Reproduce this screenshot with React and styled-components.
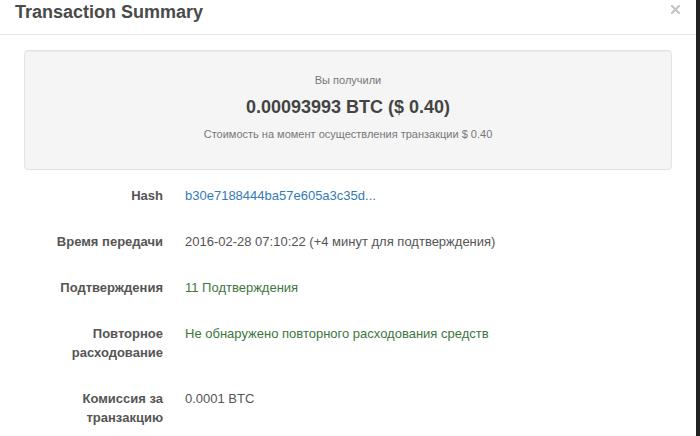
import React from "react";
import styled, { createGlobalStyle } from "styled-components";

const Global = createGlobalStyle`
  html, body { margin: 0; padding: 0; background: #222; }
  body { font-family: "Liberation Sans", Arial, sans-serif; }
  #root { width: 700px; height: 436px; overflow: hidden; }
`;

const Modal = styled.div`
  width: 696px;
  height: 436px;
  background: #fff;
  display: flex;
  flex-direction: column;
`;

const Header = styled.div`
  height: 35px;
  border-bottom: 1px solid #e5e5e5;
  display: flex;
  align-items: flex-start;
  justify-content: space-between;
  padding: 2px 16px 0 15px;
  box-sizing: border-box;
`;

const Title = styled.h4`
  margin: 0;
  font-size: 18px;
  line-height: 20px;
  font-weight: bold;
  color: #4a4a4a;
`;

const Close = styled.button`
  border: 0;
  background: none;
  padding: 0;
  margin-top: 3px;
  width: 9px;
  height: 9px;
  display: flex;
  cursor: pointer;
`;

const Well = styled.div`
  margin: 15px 24px 0;
  height: 120px;
  box-sizing: border-box;
  background: #f5f5f5;
  border: 1px solid #e3e3e3;
  border-radius: 4px;
  box-shadow: inset 0 1px 1px rgba(0, 0, 0, 0.05);
  padding-top: 21px;
  display: flex;
  flex-direction: column;
  align-items: center;
  gap: 7px;
`;

const Small = styled.div`
  font-size: 11px;
  line-height: 16px;
  color: #777;
`;

const Amount = styled.div`
  font-size: 18px;
  line-height: 24px;
  font-weight: bold;
  color: #444;
`;

const Details = styled.div`
  margin-top: 16px;
  padding-left: 24px;
  display: grid;
  grid-template-columns: 139px 1fr;
  column-gap: 22px;
  row-gap: 27px;
  font-size: 13px;
  line-height: 19px;
`;

const Label = styled.div`
  text-align: right;
  font-weight: bold;
  color: #555;
`;

const Value = styled.div`
  color: ${(p) => (p.$tone === "link" ? "#337ab7" : p.$tone === "ok" ? "#3c763d" : "#555")};
`;

const rows = [
  { label: "Hash", value: "b30e7188444ba57e605a3c35d...", tone: "link" },
  { label: "Время передачи", value: "2016-02-28 07:10:22 (+4 минут для подтверждения)" },
  { label: "Подтверждения", value: "11 Подтверждения", tone: "ok" },
  { label: "Повторное расходование", value: "Не обнаружено повторного расходования средств", tone: "ok" },
  { label: "Комиссия за транзакцию", value: "0.0001 BTC" },
];

export default function App() {
  return (
    <>
      <Global />
      <Modal>
        <Header>
          <Title>Transaction Summary</Title>
          <Close aria-label="Close">
            <svg width="9" height="9" viewBox="0 0 9 9">
              <path d="M1 1 L8 8 M8 1 L1 8" stroke="#c4c4c4" strokeWidth="2.2" strokeLinecap="square" />
            </svg>
          </Close>
        </Header>
        <Well>
          <Small>Вы получили</Small>
          <Amount>0.00093993 BTC ($ 0.40)</Amount>
          <Small>Стоимость на момент осуществления транзакции $ 0.40</Small>
        </Well>
        <Details>
          {rows.map((r) => (
            <React.Fragment key={r.label}>
              <Label>{r.label}</Label>
              <Value $tone={r.tone}>{r.value}</Value>
            </React.Fragment>
          ))}
        </Details>
      </Modal>
    </>
  );
}
